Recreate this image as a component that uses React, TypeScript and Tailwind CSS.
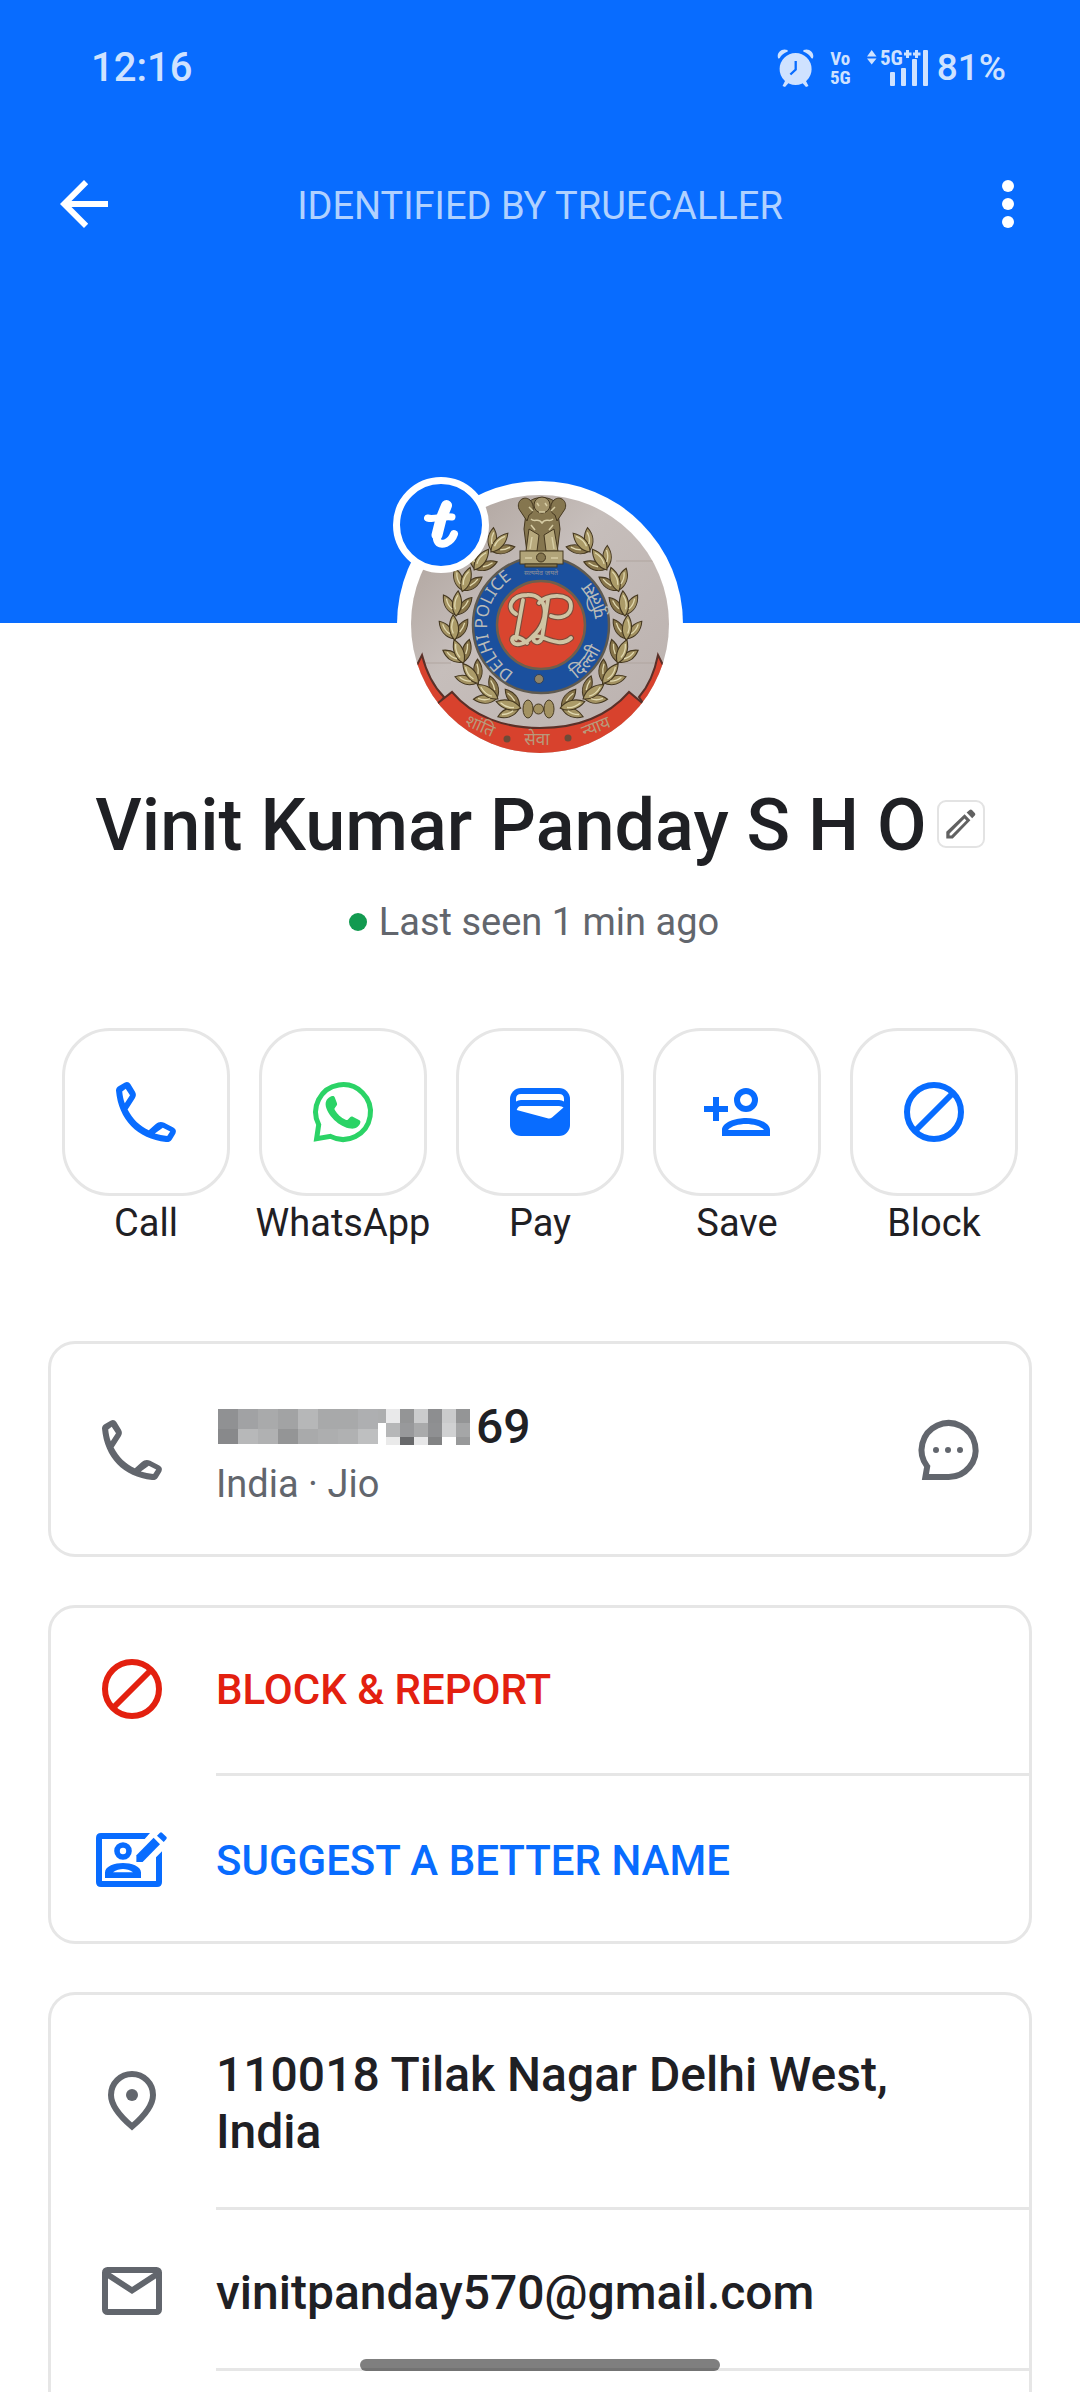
import type { ReactNode } from 'react';

// Leaf clusters of the wreath, left half. The right half is mirrored.
const wreath = [
  { x: 88, y: 48, angle: 42 },
  { x: 70, y: 65, angle: 35 },
  { x: 55, y: 85, angle: 18 },
  { x: 46, y: 109, angle: 5 },
  { x: 43, y: 133, angle: -4 },
  { x: 48, y: 157, angle: -22 },
  { x: 60, y: 179, angle: -38 },
  { x: 77, y: 197, angle: -55 },
  { x: 98, y: 210, angle: -75 },
];

const mosaicLeft = [
  ['#909193', '#a1a2a4', '#a9aaab', '#a2a3a4', '#b6b7b8', '#a8a9aa', '#a8a9aa', '#aeafb1'],
  ['#88898b', '#b7b8b9', '#b0b1b2', '#949596', '#a9aaab', '#adaeaf', '#b0b1b2', '#bebfc0'],
];

const mosaicRight = [
  ['#e9e9ea', '#949596', '#cbcccd', '#8d8e90', '#cacbcc', '#949596'],
  ['#b6b7b8', '#98999b', '#a9aaab', '#8f9092', '#d0d1d2', '#a5a6a7'],
  ['#eaeaea', '#68696b', '#e7e7e8', '#828384', '#ffffff', '#98999a'],
];

const actions = [
  { label: 'Call', icon: <PhoneIcon />, color: 'text-[#086cff]' },
  { label: 'WhatsApp', icon: <WhatsAppIcon />, color: 'text-[#2bd366]' },
  { label: 'Pay', icon: <PayIcon />, color: 'text-[#086cff]' },
  { label: 'Save', icon: <SaveIcon />, color: 'text-[#086cff]' },
  { label: 'Block', icon: <BlockIcon />, color: 'text-[#086cff]' },
];

export default function App() {
  return (
    <div className="flex min-h-screen flex-col bg-white font-['Roboto',sans-serif] text-[#1f2024]">
      <header className="bg-[#086cff] pb-[335px]">
        <StatusBar />
        <div className="flex h-[168px] items-center justify-between pr-9 pl-12">
          <button aria-label="Back" className="text-white">
            <Icon>
              <path d="M60 33H23.5L40.2 16.2L36 12L12 36L36 60L40.2 55.8L23.5 39H60Z" fill="currentColor" />
            </Icon>
          </button>
          <p className="grow pt-1 pr-3 text-center text-[#b0d1ff] text-[38px] leading-[42px]">
            IDENTIFIED BY TRUECALLER
          </p>
          <button aria-label="More options" className="text-white">
            <Icon>
              <g fill="currentColor">
                <circle cx="36" cy="18" r="6" />
                <circle cx="36" cy="36" r="6" />
                <circle cx="36" cy="54" r="6" />
              </g>
            </Icon>
          </button>
        </div>
      </header>

      <main className="flex grow flex-col">
        <section className="flex flex-col items-center">
          <Avatar />
          <div className="mt-[17px] flex items-center gap-[10px]">
            <h1 className="whitespace-nowrap font-medium text-[72px] leading-[84px]">
              Vinit Kumar Panday S H O
            </h1>
            <button
              aria-label="Edit name"
              className="mb-1 size-12 rounded-[9px] border-2 border-[#e3e3e3] text-[#616161]"
            >
              <svg className="-m-[2px] size-12" viewBox="0 0 48 48">
                <path
                  clipRule="evenodd"
                  d="M9.3 38.5V31.8L27.6 14.2L33.4 20.3L15.8 38.5ZM12.6 35.4H14.4L29.3 20.4L27.5 18.4L12.6 33.4Z"
                  fill="currentColor"
                  fillRule="evenodd"
                />
                <path d="M29.6 12.6L32.6 9.9Q34 9 35.2 10.2L38 13.2Q38.8 14.4 37.8 15.4L35.2 18.2Z" fill="currentColor" />
              </svg>
            </button>
          </div>
          <p className="mt-[33px] flex items-center gap-3 pr-3 text-[#62666d] text-[38px] leading-[42px]">
            <span className="size-[18px] rounded-full bg-[#129a50]" />
            Last seen 1 min ago
          </p>
        </section>

        <section className="mt-[85px] flex justify-between px-[62px]">
          {actions.map((action) => (
            <button className="flex w-[168px] flex-col items-center gap-[6px]" key={action.label}>
              <span
                className={`${action.color} flex size-[168px] items-center justify-center rounded-[48px] border-3 border-[#e6e6e6]`}
              >
                {action.icon}
              </span>
              <span className="whitespace-nowrap text-[38px] leading-[42px]">{action.label}</span>
            </button>
          ))}
        </section>

        <section className="mt-[97px] flex grow flex-col gap-12 px-12">
          <Card>
            <li className="flex items-center px-12 pt-[53px] pb-[52px]">
              <span className="text-[#62666d]">
                <PhoneIcon />
              </span>
              <div className="ml-12 grow pt-1">
                <p className="flex items-center gap-[6px] font-medium text-[48px] leading-[57px]">
                  <HiddenDigits />
                  69
                </p>
                <p className="mt-2 text-[#62666d] text-[38px] leading-[42px]">India · Jio</p>
              </div>
              <button aria-label="Send message" className="text-[#62666d]">
                <ChatIcon />
              </button>
            </li>
          </Card>

          <Card>
            <li>
              <button className="flex h-[168px] w-full items-center gap-12 px-12 font-medium text-[#e3200f] text-[42px]">
                <BlockIcon />
                BLOCK &amp; REPORT
              </button>
            </li>
            <Divider />
            <li>
              <button className="flex h-[168px] w-full items-center gap-12 px-12 font-medium text-[#086cff] text-[42px]">
                <SuggestIcon />
                SUGGEST A BETTER NAME
              </button>
            </li>
          </Card>

          <Card open>
            <DetailRow icon={<PinIcon />}>
              110018 Tilak Nagar Delhi West,
              <br />
              India
            </DetailRow>
            <Divider />
            <DetailRow icon={<MailIcon />}>
              <a href="mailto:vinitpanday570@gmail.com">vinitpanday570@gmail.com</a>
            </DetailRow>
            <Divider />
          </Card>
        </section>
      </main>

      <div className="fixed bottom-[21px] left-1/2 h-3 w-1/3 -translate-x-1/2 rounded-full bg-black/50" />
    </div>
  );
}

function StatusBar() {
  return (
    <div className="flex h-[120px] items-center justify-between pt-4 pr-[74px] pl-[91px] font-medium text-[#cfe2ff]">
      <span className="text-[40px]">12:16</span>
      <div className="flex items-center">
        <svg className="mr-4 h-[38px] w-[37px]" viewBox="0 0 37 38">
          <g fill="currentColor">
            <circle cx="18.6" cy="20" r="16" />
            <path d="M1.2 9.5C-1 4 4.5-1.5 10.5 1L10.8 2.5C7 3.8 4.2 6 2.6 9.3Z" />
            <path d="M35.8 9.5C38 4 32.5-1.5 26.5 1L26.2 2.5C30 3.8 32.8 6 34.4 9.3Z" />
            <path d="M8.5 31L5.5 37L8 38L12.5 33ZM28.5 31L31.5 37L29 38L24.5 33Z" />
          </g>
          <path d="M18.7 12V20.5L13.4 25.5" fill="none" stroke="#086cff" strokeWidth="2.3" />
        </svg>
        <span className="mr-4 flex flex-col items-center font-['Roboto_Condensed','Roboto',sans-serif] font-bold text-[19px] leading-[19px]">
          <span>Vo</span>
          <span>5G</span>
        </span>
        <svg className="mr-2 h-[46px] w-[62px]" fill="currentColor" viewBox="0 -4 62 46">
          <path d="M0 7.5L4.7 1L9.5 7.5ZM0 9.5H9.5L4.7 15.5Z" />
          <text fontFamily="'Roboto Condensed', Roboto, sans-serif" fontSize="21" fontWeight="700" x="13" y="16">
            5G
          </text>
          <path d="M37 3.5H39V1H42V3.5H44.5V6.5H42V9H39V6.5H37ZM46 3.5H48V1H51V3.5H53.5V6.5H51V9H48V6.5H46Z" />
          <rect height="14" rx="1" width="5" x="23" y="23" />
          <rect height="18" rx="1" width="5" x="34" y="19" />
          <rect height="27" rx="1" width="5" x="45" y="10" />
          <rect height="36" rx="1" width="5" x="56" y="1" />
        </svg>
        <span className="text-[37px]">81%</span>
      </div>
    </div>
  );
}

function Avatar() {
  return (
    <div className="relative -mt-[142px] size-[286px] rounded-full bg-white p-[14px]">
      <Emblem />
      <svg className="absolute -top-1 -left-1 size-24" viewBox="0 0 96 96">
        <circle cx="48" cy="48" fill="#086cff" r="44.5" stroke="#ffffff" strokeWidth="7" />
        <g fill="none" stroke="#ffffff" strokeLinecap="round" strokeLinejoin="round">
          <path d="M54 28C50 37 45 49 44 58C43 66 47 68 53 66C57 64 60 60 61 57" strokeWidth="8" />
          <path d="M53.5 28.5L48 42L44 58" strokeWidth="11" />
          <path d="M34.5 41C42 43 50 38.5 59 40" strokeWidth="7" />
        </g>
      </svg>
    </div>
  );
}

function Leaves({ x, y, angle }: { x: number; y: number; angle: number }) {
  return (
    <g stroke="#453820" strokeWidth="1" transform={`translate(${x} ${y}) rotate(${angle}) scale(1.1)`}>
      <path d="M0 10C-9 8-13 1-13-7C-6-5-1 1 0 10Z" fill="#a39262" />
      <path d="M0 10C9 8 13 1 13-7C6-5 1 1 0 10Z" fill="#87754a" />
      <path d="M0 11C-6 4-5-5 0-12C5-5 6 4 0 11Z" fill="#ab9b68" />
      <path d="M-1 5C-3 0-2-4 0-8M-4 5C-7 3-9 0-10-4M5 4C8 1 9-1 10-4" fill="none" stroke="#e0d8b0" strokeWidth="1.2" />
    </g>
  );
}

function Emblem() {
  return (
    <svg aria-label="Delhi Police emblem" className="size-full rounded-full" role="img" viewBox="0 0 258 258">
      <defs>
        <linearGradient id="stone" x1="0" x2="1" y1="0" y2="1">
          <stop offset="0" stopColor="#a99d96" />
          <stop offset="0.4" stopColor="#c6bebb" />
          <stop offset="1" stopColor="#bab0ad" />
        </linearGradient>
        <path d="M103 178A56 56 0 0 1 112 78" id="ring-left" />
        <path d="M165 184A64 64 0 0 0 194 134" id="ring-right-low" />
        <path d="M195 122A64 64 0 0 0 166 76" id="ring-right-high" />
      </defs>
      <rect fill="url(#stone)" height="258" width="258" />
      <path d="M205 66H258M0 168H40M205 168H258" fill="none" stroke="#b0a59f" strokeWidth="1" />

      {/* red ribbon */}
      <g fill="#d8422d" stroke="#5a3028" strokeWidth="2">
        <path d="M11 160C16 180 24 193 33 202L20 220L-4 190Z" />
        <path d="M247 160C243 180 236 193 228 202L240 220L262 190Z" />
        <path d="M41 197C62 222 94 233 129 233C164 233 196 222 218 197L236 212C216 244 178 262 129 262C80 262 42 244 22 212Z" />
      </g>

      {wreath.map((leaf) => (
        <g key={leaf.y}>
          <Leaves {...leaf} />
          <g transform="translate(259 0) scale(-1 1)">
            <Leaves {...leaf} />
          </g>
        </g>
      ))}
      <g fill="#a39262" stroke="#453820" strokeWidth="1">
        <ellipse cx="117" cy="214" rx="5" ry="9" />
        <ellipse cx="138" cy="214" rx="5" ry="9" />
        <circle cx="127.5" cy="214" r="5" />
      </g>

      <circle cx="130" cy="130" fill="#1b509e" r="68" stroke="#5f5a50" strokeWidth="2.5" />
      <circle cx="130" cy="130" fill="#d9452f" r="44" stroke="#6f5f4c" strokeWidth="2.5" />
      <circle cx="128" cy="184" fill="#8f8366" r="4.5" stroke="#33415a" />

      <g fill="#b9bbb8" fontFamily="'Noto Sans', 'Open Sans', sans-serif">
        <text fontSize="17">
          <textPath href="#ring-left">DELHI POLICE</textPath>
        </text>
        <text fontSize="18">
          <textPath href="#ring-right-low">दिल्ली</textPath>
        </text>
        <text fontSize="18">
          <textPath href="#ring-right-high">पुलिस</textPath>
        </text>
      </g>
      <g fill="#b89a7c" fontFamily="'Noto Sans', 'Open Sans', sans-serif" fontSize="17" textAnchor="middle">
        <text transform="translate(67 236) rotate(24)">शांति</text>
        <text transform="translate(126 250)">सेवा</text>
        <text transform="translate(187 237) rotate(-22)">न्याय</text>
        <circle cx="96" cy="244" fill="#6d4a38" r="3.5" />
        <circle cx="157" cy="243" fill="#6d4a38" r="3.5" />
      </g>

      {/* monogram */}
      <g fill="none" strokeLinecap="round" strokeLinejoin="round">
        <g stroke="#7d4b3a" strokeWidth="6">
          <path d="M105 119C94 113 101 100 116 100C138 99 139 126 122 141C114 150 103 152 101 145C101 139 110 142 116 148M112 105L105 144" />
          <path d="M128 108C134 99 160 97 160 111C160 122 148 124 140 121M137 104L131 143C128 151 119 146 124 141C132 140 148 154 160 143" />
        </g>
        <g stroke="#cfc5a4" strokeWidth="3.8">
          <path d="M105 119C94 113 101 100 116 100C138 99 139 126 122 141C114 150 103 152 101 145C101 139 110 142 116 148M112 105L105 144" />
          <path d="M128 108C134 99 160 97 160 111C160 122 148 124 140 121M137 104L131 143C128 151 119 146 124 141C132 140 148 154 160 143" />
        </g>
      </g>

      {/* lion capital */}
      <g fill="#85764f" stroke="#453820" strokeWidth="1">
        <path d="M116 10C120 0 142 0 146 10L149 34L146 58H116L113 34Z" />
        <path d="M108 14C105 6 113 0 119 5C124 10 123 18 118 20L116 26Z" />
        <path d="M154 14C157 6 149 0 143 5C138 10 139 18 144 20L146 26Z" />
        <path d="M118 34L115 56H126L128 40ZM143 34L147 56H135L133 40Z" fill="#b6a87c" />
        <circle cx="131" cy="10" fill="#a3946b" r="8" />
        <rect fill="#b1a479" height="13" width="43" x="109" y="56" />
        <circle cx="130" cy="62.5" r="4.5" />
        <rect height="3" width="32" x="114" y="69" />
      </g>
      <path
        d="M118 12L122 16M126 8L128 11M134 8L136 11M140 16L144 12M120 24C124 28 127 22 131 28C135 22 138 28 142 24M120 30L124 35M138 35L142 30M128 17H134M121 42L119 54M141 42L143 54M114 63H121M140 63H147"
        fill="none"
        stroke="#d6cca4"
        strokeWidth="1.5"
      />
      <text
        fill="#8f9098"
        fontFamily="'Noto Sans', 'Open Sans', sans-serif"
        fontSize="7"
        textAnchor="middle"
        x="130"
        y="80"
      >
        सत्यमेव जयते
      </text>
    </svg>
  );
}

// Pixelated block that covers the leading digits of the number
function HiddenDigits() {
  return (
    <svg aria-label="Hidden digits" className="ml-[2px] h-9 w-[252px]" role="img" shapeRendering="crispEdges" viewBox="0 0 252 36">
      {mosaicRight.map((row, y) =>
        row.map((fill, x) => (
          <rect fill={fill} height="14" key={`${x}-${y}`} width="14" x={168 + x * 14} y={y * 14} />
        ))
      )}
      <rect fill="#adaeaf" height="14" width="8" x="160" y="0" />
      {mosaicLeft.map((row, y) =>
        row.map((fill, x) => (
          <rect fill={fill} height={y === 0 ? 20 : 15} key={`${x}-${y}`} width="20" x={x * 20} y={y * 20} />
        ))
      )}
    </svg>
  );
}

function Card({ children, open = false }: { children: ReactNode; open?: boolean }) {
  return (
    <div
      className={`${open ? 'grow rounded-t-[27px] border-b-0' : 'rounded-[27px]'} border-3 border-[#e6e6e6]`}
    >
      <ul className="-m-[3px]">{children}</ul>
    </div>
  );
}

function Divider() {
  return <li aria-hidden="true" className="ml-[168px] h-[3px] bg-[#e6e6e6]" />;
}

function DetailRow({ icon, children }: { icon: ReactNode; children: ReactNode }) {
  return (
    <li className="flex items-center gap-12 px-12 pt-[50px] pb-[47px]">
      <span className="-my-2 shrink-0 text-[#62666d]">{icon}</span>
      <p className="pt-1 font-medium text-[48px] leading-[57px]">{children}</p>
    </li>
  );
}

function Icon({ children }: { children: ReactNode }) {
  return (
    <svg aria-hidden="true" className="size-[72px] shrink-0" fill="none" viewBox="0 0 72 72">
      {children}
    </svg>
  );
}

function PhoneIcon() {
  return (
    <Icon>
      <path
        clipRule="evenodd"
        d="M6 14.5C6 12.5 7 11.2 8.5 10.2L14.5 6.7C17 5.4 19 6 20.3 8L25 15.8C26.3 18 26.2 20.2 24.8 22.2L17.6 33.4C22.8 43.3 29.5 49.7 38.8 54.2L45.8 48C48.2 45.8 51.3 45.4 54.2 46.8L63.3 51.5C65.8 52.9 66.6 55 65.3 57.7L61.8 63.5C60.4 65.7 58.6 66.2 56 66C27.5 63 8.5 43.5 6 14.5ZM12.2 15.5C12.6 19.5 13.4 23.6 14.8 27.2L20 19.2L15.7 12.7ZM44.8 57.6C48.8 58.8 52.8 59.6 57.2 60L60.2 55.4L52.8 51.8Z"
        fill="currentColor"
        fillRule="evenodd"
      />
    </Icon>
  );
}

function WhatsAppIcon() {
  return (
    <Icon>
      <path d="M11.7 48.6A27.4 27.4 0 1 1 23.5 60.4L9.6 62.8Z" stroke="currentColor" strokeWidth="5" />
      <path
        d="M25.5 19.9C22 20.5 18.5 23.5 18.6 28.5C19.2 38.5 32.5 51.5 44 52.6C48.5 53 52.5 50.5 53.3 46.8C53.6 45.3 53.3 44.6 52 44L46.2 40.9C44.8 40.2 43.9 40.3 42.9 41.5L41 43.5C40.2 44.2 39.5 44.2 38.6 43.8C34 41.8 30.3 38.2 27.8 34C27.3 33.1 27.4 32.5 28 31.8L29.6 29.6C30.2 28.7 30.3 27.8 29.8 26.7L27.7 21.2C27.2 20.1 26.6 19.8 25.5 19.9Z"
        fill="currentColor"
      />
    </Icon>
  );
}

function PayIcon() {
  return (
    <Icon>
      <rect fill="currentColor" height="48" rx="11" width="60" x="6" y="12" />
      <path d="M12 25.5V23Q12 18 17 18H55Q60 18 60 23V25.5Q58 24 55 24H17Q14 24 12 25.5Z" fill="#ffffff" />
      <path d="M12.7 34Q14 30 17 30H55Q58 30 59.5 31.5L48 41.5Q46 43 43.5 42.2Z" fill="#ffffff" />
    </Icon>
  );
}

function SaveIcon() {
  return (
    <Icon>
      <path d="M3 33H27M15 21V45" stroke="currentColor" strokeWidth="6" />
      <circle cx="45" cy="24" r="9" stroke="currentColor" strokeWidth="6" />
      <path
        clipRule="evenodd"
        d="M21 60V54C21 46 35 42 45 42S69 46 69 54V60ZM27 54H63C60 50 52 48 45 48S30 50 27 54Z"
        fill="currentColor"
        fillRule="evenodd"
      />
    </Icon>
  );
}

function BlockIcon() {
  return (
    <Icon>
      <circle cx="36" cy="36" r="27" stroke="currentColor" strokeWidth="6" />
      <path d="M17 55L55 17" stroke="currentColor" strokeWidth="6" />
    </Icon>
  );
}

function ChatIcon() {
  return (
    <Icon>
      <path d="M36 63H13.4L15.2 52.5A27 27 0 1 1 36 63Z" stroke="currentColor" strokeWidth="6" />
      <circle cx="24" cy="36" fill="currentColor" r="3" />
      <circle cx="36" cy="36" fill="currentColor" r="3" />
      <circle cx="48" cy="36" fill="currentColor" r="3" />
    </Icon>
  );
}

function SuggestIcon() {
  return (
    <Icon>
      <path d="M54 9H5Q0 9 0 14V58Q0 63 5 63H61Q66 63 66 58V27.3L60 33.3V57H6V15H48.7Z" fill="currentColor" />
      <circle cx="27" cy="27" r="6" stroke="currentColor" strokeWidth="5.6" />
      <path
        clipRule="evenodd"
        d="M9 54V48.5C9 42 19 39 27 39S45 42 45 48.5V54ZM17 48.3H37C34 46 30 45 27 45S20 46 17 48.3Z"
        fill="currentColor"
        fillRule="evenodd"
      />
      <path d="M40.4 38V31.2L57.6 13.7L64 20.2L46.6 38Z" fill="currentColor" />
      <path d="M61 11.7L64 8.7Q65 8 66 8.7L70.5 13Q71 14.2 70.4 15L67.7 18Z" fill="currentColor" />
    </Icon>
  );
}

function PinIcon() {
  return (
    <Icon>
      <path d="M36 61.6C26 53 15 41 15 30A21 21 0 0 1 57 30C57 41 46 53 36 61.6Z" stroke="currentColor" strokeWidth="6" />
      <circle cx="36" cy="30" fill="currentColor" r="6" />
    </Icon>
  );
}

function MailIcon() {
  return (
    <Icon>
      <rect height="42" rx="2.5" stroke="currentColor" strokeWidth="6" width="54" x="9" y="15" />
      <path d="M10 18.5L36 35.5L62 18.5" stroke="currentColor" strokeWidth="6" />
    </Icon>
  );
}
